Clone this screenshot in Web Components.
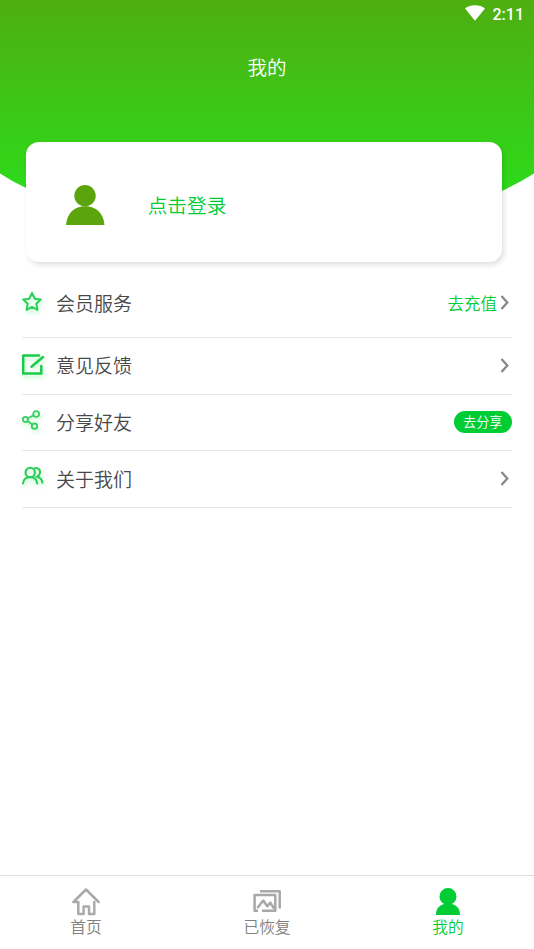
<!DOCTYPE html>
<html lang="zh-CN">
<head>
<meta charset="utf-8">
<title>我的</title>
<style>
html,body{margin:0;height:100%;background:#fff}
body{font-family:"Noto Sans CJK SC",sans-serif;font-weight:350}
</style>
</head>
<body>
<profile-page></profile-page>
<script>
const define = (name, html) => {
  const t = document.createElement('template');
  t.innerHTML = html;
  customElements.define(name, class extends HTMLElement {
    constructor() {
      super();
      this.attachShadow({mode: 'open'}).append(t.content.cloneNode(true));
    }
  });
};

define('status-bar', `
<style>
:host{display:flex;height:28px;align-items:center;justify-content:flex-end;gap:8px;padding:0 10px 1px 0;box-sizing:border-box;color:#fff;font:500 16px/27px Roboto,sans-serif}
svg{display:block;margin-bottom:1px}
span{padding-top:1px}
</style>
<svg width="20" height="16" viewBox="0 0 20 16"><path fill="#fff" d="M0 3.500C5.500-.7 14.500-.7 20 3.500L10 15.800Z"/></svg><span><slot></slot></span>`);

define('login-card', `
<style>
:host{display:flex;align-items:center;box-sizing:border-box;width:476.500px;height:120.500px;padding:6px 0 0 40px;gap:43px;border-radius:13px;background:#fff;box-shadow:2px 3px 5px rgba(0,0,0,.12);color:#0c3;font-size:19.7px;line-height:28px}
svg{display:block}
span{padding-top:1px}
</style>
<svg width="39" height="40" viewBox="0 0 39 40" fill="#5ba40c"><circle cx="19" cy="10.700" r="10.700"/><path d="M0 40C1 28 8.500 21.300 19.200 21.300S37.500 28 38.500 40Z"/></svg><span><slot></slot></span>`);

define('profile-header', `
<style>
:host{display:grid;height:270px}
:host>*{grid-area:1/1}
.content{display:flex;flex-direction:column}
h1{margin:25px 0 0;height:28px;text-align:center;color:#fff;font-weight:inherit;font-size:19.5px;line-height:28px}
.card{padding:60.500px 0 0 25.700px}
</style>
<svg width="534" height="230" viewBox="0 0 534 230"><defs><linearGradient id="g" x1="0" y1="0" x2="0" y2="200" gradientUnits="userSpaceOnUse"><stop stop-color="#4fae10"/><stop offset="1" stop-color="#2cdc1c"/></linearGradient></defs><path fill="url(#g)" d="M0 0H534V173.500Q518 183.500 502 191C470 206 380 228 267 228S64 206 26 188Q13 182 0 173.500Z"/></svg>
<div class="content"><status-bar>2:11</status-bar><h1><slot></slot></h1><div class="card"><login-card>点击登录</login-card></div></div>`);

define('menu-row', `
<style>
:host{display:flex;align-items:center;box-sizing:border-box;height:56.700px;border-bottom:1px solid #e6e6e6;color:#484848;font-size:19px;line-height:28px}
.icon{display:flex;width:34px;flex:none}
.label{flex:1;padding-bottom:1px}
::slotted(svg){display:block;overflow:visible;filter:drop-shadow(1px 3px 2px rgba(35,230,80,.28))}
</style>
<span class="icon"><slot name="icon"></slot></span><span class="label"><slot></slot></span><slot name="end"></slot>`);

define('chevron-end', `
<style>
:host{display:flex;align-items:center;gap:3px;padding-right:3px;color:#0c3;font-size:16.5px;line-height:24px}
span{padding-bottom:1px}
svg{display:block;margin-bottom:1px}
</style>
<span><slot></slot></span><svg width="9" height="15" viewBox="0 0 9 15"><path d="M1.500 1L7.300 7.500L1.500 14" fill="none" stroke="#888" stroke-width="2.300"/></svg>`);

define('share-pill', `
<style>
:host{display:flex;align-items:center;justify-content:center;width:58.500px;height:22px;margin-bottom:2px;border-radius:11px;background:#0c3;color:#fff;font-size:13.2px;line-height:22px}
</style><span><slot></slot></span>`);

define('tab-item', `
<style>
:host{display:flex;flex-direction:column;align-items:center;width:60px;color:#808080;font-size:15.7px;line-height:22px;white-space:nowrap}
:host([active]){color:#0c3}
.icon{display:flex;align-items:flex-start;height:28px}
</style>
<span class="icon"><slot name="icon"></slot></span><span><slot></slot></span>`);

define('tab-bar', `
<style>
:host{display:flex;justify-content:space-between;box-sizing:border-box;height:74px;padding:12px 56px 0;border-top:1px solid #ddd;background:#fff}
</style><slot></slot>`);

define('profile-page', `
<style>
:host{display:flex;flex-direction:column;width:534px;height:949px;background:#fff;overflow:hidden}
main{flex:1;padding:0 22px}
.first{height:68px;padding-bottom:1px}
.up{margin-top:-5px}
.up1{margin-top:-2px}
.up2{margin-top:-7px}
</style>
<profile-header>我的</profile-header>
<main>
<menu-row class="first">
<svg class="up1" slot="icon" width="21" height="20" viewBox="0 0 21 20"><path d="M10 1L12.700 6.700L18.800 7.500L14.300 11.700L15.500 17.800L10 14.900L4.500 17.800L5.700 11.700L1.200 7.500L7.300 6.700Z" fill="none" stroke="#2ecf59" stroke-width="2" stroke-linejoin="round"/></svg>会员服务<chevron-end slot="end">去充值</chevron-end></menu-row>
<menu-row>
<svg class="up1" slot="icon" width="22" height="21" viewBox="0 0 22 21"><path d="M17 1.500H1.200V19.500H19.300V12M9.500 12.800L21 3" fill="none" stroke="#18cc48" stroke-width="2.500" stroke-linecap="round" stroke-linejoin="round"/></svg>意见反馈<chevron-end slot="end"></chevron-end></menu-row>
<menu-row>
<svg class="up" slot="icon" width="20" height="20" viewBox="0 0 20 20"><g fill="none" stroke="#35d060" stroke-width="1.800"><circle cx="3.400" cy="9.500" r="2.600"/><circle cx="14.200" cy="4" r="2.900"/><circle cx="12.500" cy="16.200" r="2.700"/><path d="M5.800 8.200L11.600 5.300M5.700 11L10.200 14.600"/></g></svg>分享好友<share-pill slot="end">去分享</share-pill></menu-row>
<menu-row>
<svg class="up2" slot="icon" width="22" height="18" viewBox="0 0 22 18"><g fill="none" stroke="#2bcf56" stroke-width="2.100" stroke-linecap="round"><circle cx="8.200" cy="5.500" r="4.700"/><path d="M1 16.500C1.400 12.500 4 10.200 8.200 10.200S14.800 12.500 15.200 16.500M13 1C16.500.7 18.500 3 18 5.700C17.700 7.600 16.700 8.900 15.100 9.700C18.700 10.700 20 12.500 20.400 15.600"/></g></svg>关于我们<chevron-end slot="end"></chevron-end></menu-row>
</main>
<tab-bar>
<tab-item><svg slot="icon" width="28" height="28" viewBox="0 0 28 28"><path d="M1.400 14L14 1.500L26.600 14M1.400 14H6.300V26H11.600V18.500H17V26H22.300V14" fill="none" stroke="#aaa" stroke-width="2.500" stroke-linecap="round" stroke-linejoin="round"/></svg>首页</tab-item>
<tab-item><svg slot="icon" width="28" height="28" viewBox="0 0 28 28"><path d="M7 3.200H26.700V20.500M5 22.800H1.600V7.100H22.300V22.800H9M4.300 20L10.300 12.500L14.300 18.300L17.300 14.600L21 20.500" fill="none" stroke="#a8a8a8" stroke-width="2.500" stroke-linejoin="round"/></svg>已恢复</tab-item>
<tab-item active><svg slot="icon" width="24" height="27" viewBox="0 0 24 27" fill="#0c3"><circle cx="12" cy="8.500" r="8.500"/><path d="M0 27C0 20.500 3 17.500 8 16V14H16V16C21 17.500 24 20.500 24 27Z"/></svg>我的</tab-item>
</tab-bar>`);
</script>
</body>
</html>
